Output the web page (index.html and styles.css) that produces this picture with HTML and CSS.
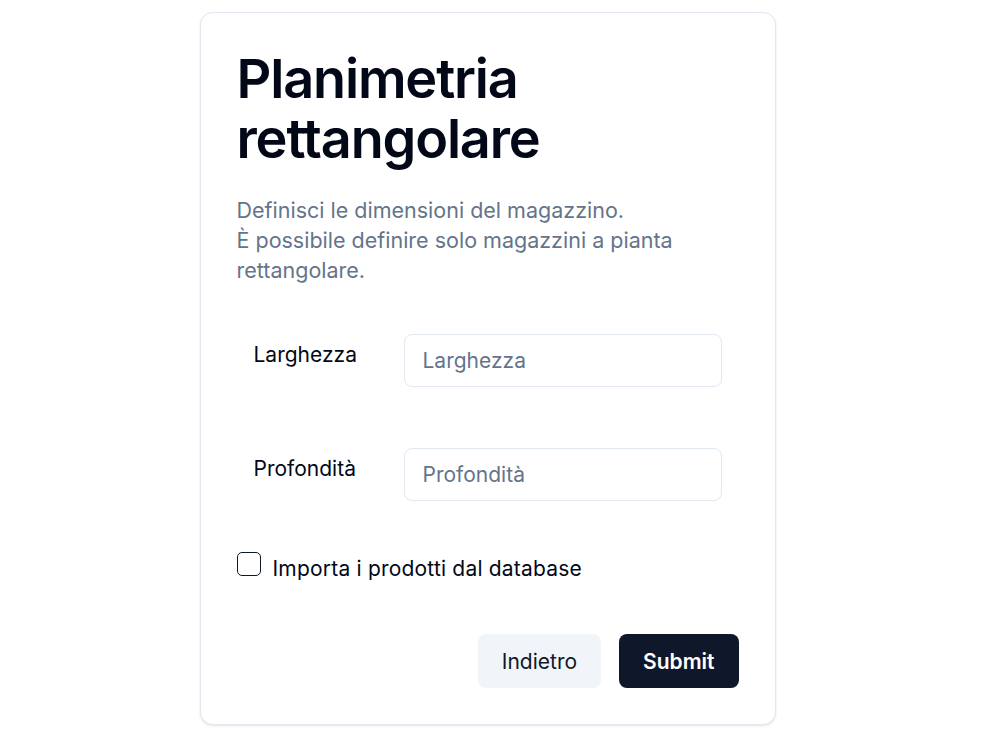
FILE: index.html
```html
<!DOCTYPE html>
<html lang="it">
<head>
<meta charset="utf-8">
<title>Planimetria rettangolare</title>
<link rel="stylesheet" href="styles.css">
</head>
<body>
<main class="page">
  <section class="card">
    <h1 class="title">Planimetria rettangolare</h1>
    <p class="desc">Definisci le dimensioni del magazzino.<br>È possibile definire solo magazzini a pianta rettangolare.</p>
    <form class="form">
      <div class="field">
        <label class="field-label" for="w">Larghezza</label>
        <input class="input" id="w" type="text" placeholder="Larghezza">
      </div>
      <div class="field">
        <label class="field-label" for="d">Profondità</label>
        <input class="input" id="d" type="text" placeholder="Profondità">
      </div>
      <label class="check">
        <input class="check-box" type="checkbox">
        <span class="check-text">Importa i prodotti dal database</span>
      </label>
      <div class="actions">
        <button type="button" class="btn btn-secondary">Indietro</button>
        <button type="submit" class="btn btn-primary">Submit</button>
      </div>
    </form>
  </section>
</main>
</body>
</html>
```

FILE: styles.css
```css
* { box-sizing: border-box; }
html, body { margin: 0; padding: 0; background: #ffffff; }
body {
  font-family: Inter, "Noto Sans", sans-serif;
  color: #020817;
}
.page {
  display: flex;
  justify-content: center;
  padding: 12px 15px 20px 0;
}
.card {
  width: 576px;
  border: 1px solid #e2e8f0;
  border-radius: 13px;
  background: #ffffff;
  box-shadow: 0 1px 3px rgba(15, 23, 42, 0.08), 0 1px 2px rgba(15, 23, 42, 0.04);
  padding: 36px;
}
.title {
  margin: 0;
  font-size: 54px;
  line-height: 60px;
  font-weight: 600;
  letter-spacing: -1.15px;
  color: #020817;
}
.desc {
  margin: 26px 0 0;
  font-size: 21.5px;
  line-height: 30px;
  color: #64748b;
}
.form {
  margin-top: 49px;
  display: flex;
  flex-direction: column;
}
.field {
  display: grid;
  grid-template-columns: 150px 1fr;
  padding: 0 17px;
  margin-bottom: 61px;
}
.field + .field { margin-bottom: 51px; }
.field-label {
  padding-top: 6px;
  font-size: 21px;
  line-height: 30px;
  font-weight: 400;
  color: #020817;
}
.input {
  height: 53px;
  width: 100%;
  border: 1px solid #e2e8f0;
  border-radius: 8px;
  padding: 0 18px;
  font-family: inherit;
  font-size: 21px;
  color: #020817;
  background: #ffffff;
  outline: none;
}
.input::placeholder { color: #64748b; }
.check {
  display: flex;
  align-items: center;
  gap: 12px;
  height: 24px;
}
.check-box {
  appearance: none;
  -webkit-appearance: none;
  margin: 0;
  width: 24px;
  height: 24px;
  flex: none;
  border: 1px solid #0f172a;
  border-radius: 5px;
  background: #ffffff;
}
.check-text {
  font-size: 21px;
  line-height: 30px;
  font-weight: 400;
  letter-spacing: 0.2px;
  color: #020817;
  padding-top: 9px;
}
.actions {
  margin-top: 58px;
  display: flex;
  justify-content: flex-end;
  gap: 18px;
}
.btn {
  height: 54px;
  border: none;
  border-radius: 8px;
  padding: 0 24px;
  font-family: inherit;
  font-size: 21px;
  cursor: pointer;
}
.btn-secondary {
  background: #f1f5f9;
  color: #0f172a;
  font-weight: 400;
}
.btn-primary {
  background: #0f172a;
  color: #ffffff;
  font-weight: 600;
}
```
